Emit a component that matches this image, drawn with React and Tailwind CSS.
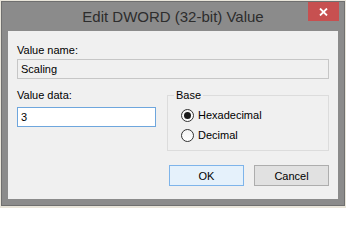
const ui = { fontFamily: '"Liberation Sans", Arial, sans-serif' };

function Radio({ checked, label }) {
  return (
    <label className="flex h-[20px] items-center pl-[13px]">
      <span className="flex h-[13px] w-[13px] items-center justify-center rounded-full border border-[#333333] bg-gradient-to-b from-[#f4f4f4] to-white">
        {checked && <span className="h-[7px] w-[7px] rounded-full bg-[#1a1a1a]" />}
      </span>
      <span className="ml-[4px]">{label}</span>
    </label>
  );
}

export default function App() {
  return (
    <div className="h-[208px] w-[346px] overflow-hidden bg-[#e9e5da] pl-[1px] pt-[1px]" style={ui}>
      {/* window frame */}
      <div className="relative h-[205px] w-[344px] border border-[#6f6f6f] bg-[#8b8b8b] px-[6px] pb-[6px]">
        <div className="flex h-[29px] items-center justify-center text-[15px] leading-none text-[#2d2d2d]">
          Edit DWORD (32-bit) Value
        </div>
        <button className="absolute right-[5px] top-[0px] flex h-[19px] w-[31px] items-center justify-center bg-[#c75050]">
          <svg width="9" height="8" viewBox="0 0 9 8">
            <path d="M1 0.5 L8 7.5 M8 0.5 L1 7.5" stroke="white" strokeWidth="1.8" />
          </svg>
        </button>

        {/* client area */}
        <div className="h-[168px] bg-[#f0f0f0] px-[9px] pt-[12px] text-[11px] leading-[14px] text-black">
          <div>Value name:</div>
          <div className="mt-[2px] flex h-[20px] items-center border border-[#c6c6c6] bg-[#f0f0f0] pl-[3px]">
            Scaling
          </div>

          <div className="mt-[9px] flex gap-[11px]">
            <div className="w-[139px]">
              <div>Value data:</div>
              <div className="mt-[5px] flex h-[20px] items-center border border-[#6ea6dd] bg-white pl-[3px]">
                3
              </div>
            </div>
            <fieldset className="m-0 h-[63px] w-[162px] border border-[#dcdcdc] p-0 pb-[5px]">
              <legend className="ml-[6px] px-[2px]">Base</legend>
              <div className="pt-[3px]">
                <Radio checked label="Hexadecimal" />
                <Radio label="Decimal" />
              </div>
            </fieldset>
          </div>

          <div className="mt-[14px] flex justify-end gap-[10px]">
            <button className="h-[21px] w-[75px] border border-[#7eb4ea] bg-[#e5f1fb] text-[11px]">OK</button>
            <button className="h-[21px] w-[75px] border border-[#adadad] bg-[#e1e1e1] text-[11px]">Cancel</button>
          </div>
        </div>
      </div>
    </div>
  );
}
